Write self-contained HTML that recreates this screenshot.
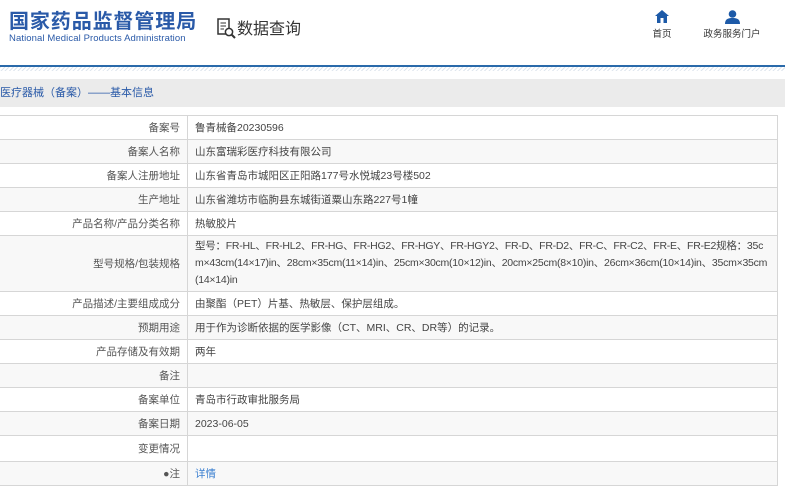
<!DOCTYPE html>
<html><head><meta charset="utf-8"><style>
*{margin:0;padding:0;box-sizing:border-box}
body{width:785px;height:490px;overflow:hidden;background:#fff;font-family:"Liberation Sans","Noto Sans CJK SC",sans-serif;color:#333;position:relative}
.t1{position:absolute;left:9px;top:8px;font-size:20px;font-weight:bold;color:#2a5aa8;letter-spacing:0.9px;line-height:28px}
.t2{position:absolute;left:9px;top:33px;font-size:9.5px;color:#2a5aa8;letter-spacing:0.1px}
.sq{position:absolute;left:217px;top:15px;font-size:16px;color:#333}
.nav{position:absolute;top:10px;font-size:9.5px;color:#333;text-align:center;line-height:12px}
.line{position:absolute;left:0;top:65px;width:785px;height:2px;background:#2a6aaa}
.hatch{position:absolute;left:0;top:67px;width:785px;height:4px;background:repeating-linear-gradient(135deg,#dfe6ee 0 1px,#fff 1px 3px)}
.bar{position:absolute;left:0;top:79px;width:785px;height:28px;background:#ebebeb;font-size:11px;color:#2a5aa8;line-height:28px}
table{position:absolute;left:-1px;top:115px;width:779px;border-collapse:collapse;font-size:10.5px}
td{border:1px solid #d6d6d6;height:24px;padding:0 7px;vertical-align:middle;color:#444}
td.l{width:188px;text-align:right;color:#555}
tr:nth-child(even){background:#f8f8f8}
td.v{line-height:17px;word-break:break-all;letter-spacing:-0.25px}
</style></head><body>
<div class="t1">国家药品监督管理局</div>
<div class="t2">National Medical Products Administration</div>
<div class="sq"><svg width="20" height="22" viewBox="0 0 20 22" style="vertical-align:-5px"><rect x="1" y="2" width="11" height="15" fill="none" stroke="#333" stroke-width="1.5"/><line x1="3.5" y1="6" x2="9" y2="6" stroke="#333"/><line x1="3.5" y1="9" x2="9" y2="9" stroke="#333"/><line x1="3.5" y1="12" x2="7" y2="12" stroke="#333"/><circle cx="12" cy="15" r="3.6" fill="#fff" stroke="#333" stroke-width="1.5"/><line x1="14.5" y1="17.5" x2="18" y2="21" stroke="#333" stroke-width="2"/></svg>数据查询</div>
<div class="nav" style="left:648px;width:28px"><svg width="14" height="13" viewBox="0 0 14 13"><path d="M7 0L0 6H2V13H12V6H14Z" fill="#1d5aa8"/><rect x="5.5" y="8" width="3" height="5" fill="#fff"/></svg><div style="margin-top:2px">首页</div></div>
<div class="nav" style="left:700px;width:64px"><svg width="15" height="14" viewBox="0 0 15 14"><circle cx="7.5" cy="4" r="3.8" fill="#1d5aa8"/><path d="M0 14C0 9 3 8 7.5 8S15 9 15 14Z" fill="#1d5aa8"/></svg><div style="margin-top:1px">政务服务门户</div></div>
<div class="line"></div><div class="hatch"></div>
<div class="bar">医疗器械（备案）——基本信息</div>
<table>
<tr><td class="l">备案号</td><td>鲁青械备20230596</td></tr>
<tr><td class="l">备案人名称</td><td>山东富瑞彩医疗科技有限公司</td></tr>
<tr><td class="l">备案人注册地址</td><td>山东省青岛市城阳区正阳路177号水悦城23号楼502</td></tr>
<tr><td class="l">生产地址</td><td>山东省潍坊市临朐县东城街道粟山东路227号1幢</td></tr>
<tr><td class="l">产品名称/产品分类名称</td><td>热敏胶片</td></tr>
<tr><td class="l" style="height:56px">型号规格/包装规格</td><td class="v">型号：FR-HL、FR-HL2、FR-HG、FR-HG2、FR-HGY、FR-HGY2、FR-D、FR-D2、FR-C、FR-C2、FR-E、FR-E2规格：35cm×43cm(14×17)in、28cm×35cm(11×14)in、25cm×30cm(10×12)in、20cm×25cm(8×10)in、26cm×36cm(10×14)in、35cm×35cm(14×14)in</td></tr>
<tr><td class="l">产品描述/主要组成成分</td><td>由聚酯（PET）片基、热敏层、保护层组成。</td></tr>
<tr><td class="l">预期用途</td><td>用于作为诊断依据的医学影像（CT、MRI、CR、DR等）的记录。</td></tr>
<tr><td class="l">产品存储及有效期</td><td>两年</td></tr>
<tr><td class="l">备注</td><td></td></tr>
<tr><td class="l">备案单位</td><td>青岛市行政审批服务局</td></tr>
<tr><td class="l">备案日期</td><td>2023-06-05</td></tr>
<tr><td class="l" style="height:26px">变更情况</td><td></td></tr>
<tr><td class="l">●注</td><td style="color:#3a7fd0">详情</td></tr>
</table>
</body></html>
